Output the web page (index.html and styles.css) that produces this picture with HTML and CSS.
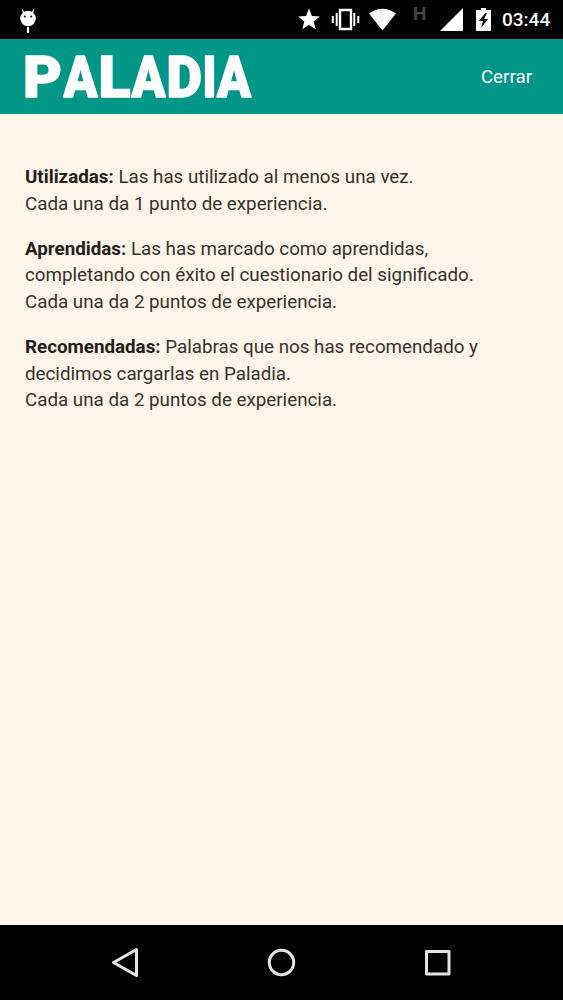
FILE: index.html
```html
<!DOCTYPE html>
<html lang="es">
<head>
<meta charset="utf-8">
<title>Paladia</title>
<link rel="stylesheet" href="styles.css">
</head>
<body>
<div class="status">
  <svg class="droid" width="20" height="28" viewBox="0 0 20 28"><circle cx="10" cy="11.500" r="7.800" fill="#fff"/><path d="M4 2.500l2 3.500M16 2.500l-2 3.500" stroke="#fff" stroke-width="1.300"/><path d="M10 20v6" stroke="#fff" stroke-width="2.200"/><circle cx="6.800" cy="9.500" r="1" /><circle cx="13.200" cy="9.500" r="1"/></svg>
  <svg class="signals" width="204" height="39" viewBox="296 0 204 39" fill="#fff">
    <path d="M309 8.500l2.900 7.400 8 .5-6.200 5.100 2 7.800-6.700-4.300-6.700 4.300 2-7.800-6.200-5.100 8-.5z"/>
    <path d="M340 10h11v19h-11z" fill="none" stroke="#fff" stroke-width="2.400"/>
    <path d="M336.700 13v13M332.800 16v7M354.300 13v13M358.300 16v7" stroke="#fff" stroke-width="2"/>
    <path d="M369 13.400Q382.500 4 396 13.400L382.500 30.500z"/>
    <path d="M463 8v23h-23z"/>
    <path d="M481 8h5v2h5v21h-15v-21h5z"/>
    <path d="M485.500 13l-6.500 8h4l-2 7 7-9h-4l3-6z" fill="#000"/>
  </svg>
  <span class="network">H</span>
  <span class="clock">03:44</span>
</div>
<header class="bar">
  <svg class="logo" width="240" height="75" viewBox="0 0 240 75">
    <text y="58"><tspan x="0" textLength="39" lengthAdjust="spacingAndGlyphs">P</tspan><tspan x="40.500" textLength="34" lengthAdjust="spacingAndGlyphs">A</tspan><tspan x="75.500" textLength="32" lengthAdjust="spacingAndGlyphs">L</tspan><tspan x="108.500" textLength="34" lengthAdjust="spacingAndGlyphs">A</tspan><tspan x="143.500" textLength="35.500" lengthAdjust="spacingAndGlyphs">D</tspan><tspan x="179.500" textLength="14" lengthAdjust="spacingAndGlyphs">I</tspan><tspan x="194" textLength="34" lengthAdjust="spacingAndGlyphs">A</tspan></text>
  </svg>
  <a class="close">Cerrar</a>
</header>
<main class="content">
  <p><b>Utilizadas:</b> Las has utilizado al menos una vez.<br>Cada una da 1 punto de experiencia.</p>
  <p><b>Aprendidas:</b> Las has marcado como aprendidas,<br>completando con éxito el cuestionario del significado.<br>Cada una da 2 puntos de experiencia.</p>
  <p><b>Recomendadas:</b> Palabras que nos has recomendado y<br>decidimos cargarlas en Paladia.<br>Cada una da 2 puntos de experiencia.</p>
</main>
<nav class="nav">
  <svg width="32" height="32" viewBox="0 0 32 32"><path d="M4 16L27 3v26z"/></svg>
  <svg width="32" height="32" viewBox="0 0 32 32"><circle cx="16" cy="16" r="12.200"/></svg>
  <svg width="32" height="32" viewBox="0 0 32 32"><path d="M5 5h22.500v22.500h-22.500z"/></svg>
</nav>
</body>
</html>
```
FILE: styles.css
```css
body {
  margin: 0;
  height: 1000px;
  display: flex;
  flex-direction: column;
  background: #fef6eb;
  color: #34322a;
  font-family: Roboto, sans-serif;
}
.status {
  height: 39px;
  flex: none;
  display: flex;
  align-items: center;
  background: #000;
  color: #fff;
  position: relative;
}
.droid { margin: 2px 0 0 18px; }
.signals { margin-left: 258px; }
.network {
  position: absolute;
  left: 413px;
  top: 4px;
  font-size: 19px;
  line-height: 20px;
  font-weight: 700;
  color: #444;
}
.clock { margin-left: 2px; font-size: 19px; font-weight: 500; }
.bar {
  height: 75px;
  flex: none;
  box-sizing: border-box;
  padding: 0 31px 0 23px;
  display: flex;
  align-items: center;
  justify-content: space-between;
  background: #009688;
  color: #fff;
}
.logo {
  fill: #fff;
  stroke: #fff;
  stroke-width: 1.500;
  stroke-linejoin: round;
  font-size: 56.500px;
  font-weight: 900;
}
.close { font-size: 18.780px; }
.content {
  flex: 1;
  padding: 50px 25px 0;
  font-size: 18.780px;
  line-height: 26.600px;
}
.content p { margin: 0 0 18.600px; white-space: nowrap; }
.content b { color: #22211a; }
.nav {
  height: 75px;
  flex: none;
  display: flex;
  align-items: center;
  justify-content: center;
  gap: 124px;
  background: #000;
}
.nav svg {
  fill: none;
  stroke: #e4e4e4;
  stroke-width: 3;
  stroke-linejoin: round;
  transform: translate(-0.500px, -0.500px);
}
```
